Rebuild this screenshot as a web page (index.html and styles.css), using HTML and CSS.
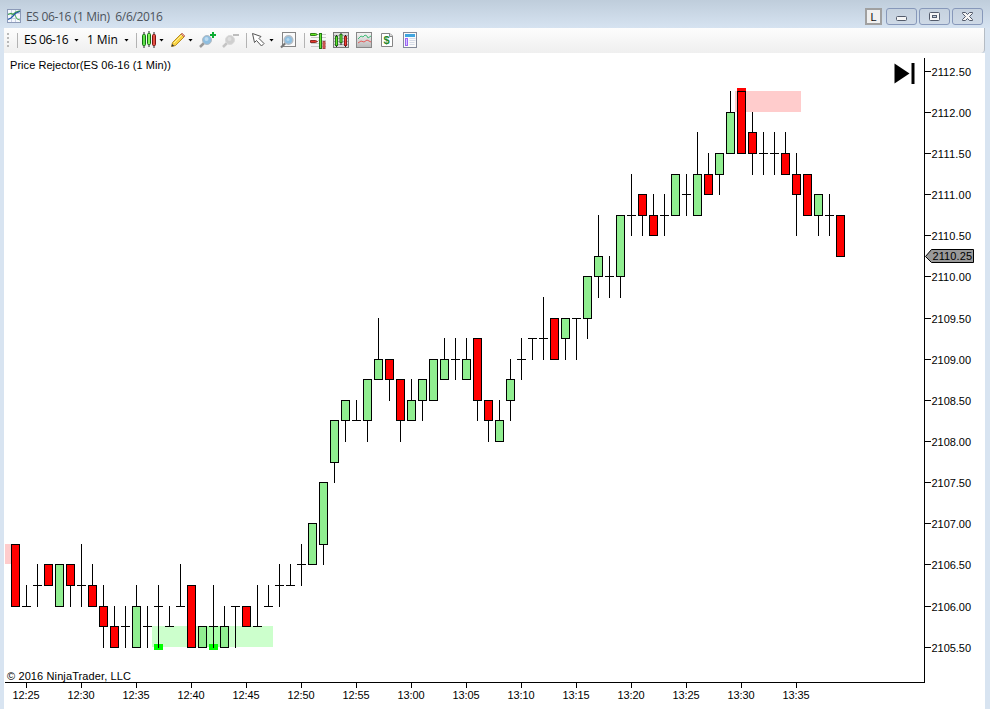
FILE: index.html
```
<!DOCTYPE html>
<html lang="en">
<head>
<meta charset="utf-8">
<title>ES 06-16 (1 Min)</title>
<link rel="stylesheet" href="styles.css">
</head>
<body>
<div class="window">
  <header class="titlebar">
    <svg class="app-icon" width="15" height="15" viewBox="0 0 15 15">
      <rect x=".5" y=".5" width="13" height="13" fill="#f4f7fd" stroke="#8c9ab8"/>
      <path d="M4.500 1v12M8.500 1v12M1 4.500h12M1 9.500h12" stroke="#c6d0e4" fill="none"/>
      <path d="M1 5.500l3-1 2 1 3-2.500 4-1" stroke="#3aa346" stroke-width="1.300" fill="none"/>
      <path d="M1 10.500l3-1.500 3-3 2-2 4-1.500" stroke="#2458a8" stroke-width="1.300" fill="none"/>
      <path d="M8 6l2 4 3 1" stroke="#53b45b" fill="none"/>
    </svg>
    <h1 class="title">ES 06-16 (1 Min)&nbsp; 6/6/2016</h1>
    <div class="controls">
      <span class="link-btn">L</span>
      <span class="win-btn"><svg width="29" height="15"><rect x="9.500" y="7.500" width="10" height="4" rx="1" fill="#f5f5f5" stroke="#535b6b"/></svg></span>
      <span class="win-btn"><svg width="29" height="15"><rect x="9.500" y="3.500" width="10" height="8" rx="1" fill="#f5f5f5" stroke="#535b6b"/><rect x="12.500" y="6.500" width="4" height="2" fill="#c5d2e0" stroke="#535b6b"/></svg></span>
      <span class="win-btn"><svg width="29" height="15"><path d="M9.500 3.500h3l2 2 2-2h3v1l-3 3 3 3v1h-3l-2-2-2 2h-3v-1l3-3-3-3z" fill="#f5f5f5" stroke="#535b6b"/></svg></span>
    </div>
  </header>

  <nav class="toolbar">
    <i class="grip"></i>
    <i class="sep"></i>
    <span class="label">ES 06-16</span><i class="arrow"></i>
    <span class="label wide">1 Min</span><i class="arrow"></i>
    <i class="sep"></i>
    <svg width="16" height="18" viewBox="0 0 16 18">
      <path d="M3 1v16M8 0v16M13 1v16" stroke="#222"/>
      <rect x="1.500" y="3.500" width="3" height="11" rx="1" fill="#5fe34a" stroke="#147014"/>
      <rect x="6.500" y="2.500" width="3" height="11" rx="1" fill="#83f35c" stroke="#147014"/>
      <rect x="11.500" y="3.500" width="3" height="11" rx="1" fill="#e45143" stroke="#7c1515"/>
    </svg>
    <i class="arrow"></i>
    <svg width="16" height="16" viewBox="0 0 16 16">
      <path d="M1.500 14.500l1-4 8.500-8.500 3 3-8.500 8.500z" fill="#f8d344" stroke="#b78c25"/>
      <path d="M4 11l8-8" stroke="#fff09a"/><path d="M11 2l1-1 3 3-1 1z" fill="#f0a08e" stroke="#b46c54" stroke-width=".7"/>
      <path d="M1.500 14.500l.7-2.500 2 2z" fill="#333"/>
    </svg>
    <i class="arrow"></i>
    <svg width="18" height="18" viewBox="0 0 18 18">
      <path d="M1 16l5-5" stroke="#999" stroke-width="2.500"/>
      <circle cx="8" cy="9" r="4.500" fill="#8ebee0" stroke="#b2bbc3"/><circle cx="7.500" cy="8" r="2" fill="#bfdcf0"/>
      <path d="M14 1v6M11 4h6" stroke="#0cab32" stroke-width="2"/>
    </svg>
    <svg width="18" height="18" viewBox="0 0 18 18">
      <path d="M1 16l5-5" stroke="#c4c4c4" stroke-width="2.500"/>
      <circle cx="8" cy="9" r="4.500" fill="#cfcfcf" stroke="#dadada"/><circle cx="7.500" cy="8" r="2" fill="#dedede"/>
      <path d="M11 4h6" stroke="#bdbdbd" stroke-width="2"/>
    </svg>
    <i class="sep"></i>
    <svg width="16" height="16" viewBox="0 0 16 16">
      <path d="M1.500 1.500l2 9 2-2 5 5.500 2.500-2.500-5-5 2-2z" fill="#fff" stroke="#555"/>
    </svg>
    <i class="arrow"></i>
    <svg width="18" height="18" viewBox="0 0 18 18">
      <rect x="2.500" y="1.500" width="13" height="14" fill="#fafafa" stroke="#858585"/>
      <path d="M1 16.500l5-5" stroke="#777" stroke-width="2.200"/>
      <circle cx="8.500" cy="9" r="4.300" fill="#8dbfe2" stroke="#b4bcc4" stroke-width="1.500"/><circle cx="8" cy="8.500" r="1.500" fill="#b5d8ee"/>
    </svg>
    <i class="sep"></i>
    <svg width="18" height="18" viewBox="0 0 18 18">
      <path d="M2 6.500h15M2 12.500h15M9 3.500h8M9 9.500h8M2 15.500h15" stroke="#c9c9c9"/>
      <path d="M1.500 2.500h5l2 1-2 1h-5z" fill="#5fe91f" stroke="#347d1c"/>
      <path d="M1.500 9.500h5l2 1-2 1h-5z" fill="#e4372b" stroke="#8c2b22"/>
      <rect x="10.500" y="2.500" width="2" height="15" fill="#64e52d" stroke="#217718"/>
      <rect x="14" y="10.500" width="2" height="7" fill="#ec655d" stroke="#a34440"/>
    </svg>
    <svg width="18" height="18" viewBox="0 0 18 18">
      <rect x="1.500" y="1.500" width="15" height="15" fill="#ddd" stroke="#777"/>
      <path d="M2 4.500h14M2 7.500h14M2 10.500h14M2 13.500h14" stroke="#aaa"/>
      <path d="M4.500 4v12M9 2v12M13.500 4v12" stroke="#222"/>
      <rect x="3.500" y="5.500" width="2" height="9" fill="#64e52d" stroke="#217718"/>
      <rect x="8" y="3.500" width="2" height="8" fill="#78ee40" stroke="#217718"/>
      <rect x="12.500" y="5.500" width="2" height="9" fill="#f33d31" stroke="#8d1d1d"/>
    </svg>
    <svg width="18" height="18" viewBox="0 0 18 18">
      <defs><linearGradient id="pane" x2="0" y2="1"><stop stop-color="#f5f5f5"/><stop offset="1" stop-color="#b8b8b8"/></linearGradient></defs>
      <rect x="1.500" y="1.500" width="15" height="15" fill="url(#pane)" stroke="#888"/>
      <path d="M3 8l3-3 2 1 2-2 2 1 1 2 3-2" stroke="#42bd79" fill="none"/>
      <path d="M3 12l3-2 3 1 3-2 4 2" stroke="#e45b59" fill="none"/>
    </svg>
    <svg width="18" height="18" viewBox="0 0 18 18">
      <path d="M3.500 2.500h8.500l2.500 2.500v10.500h-11z" fill="#fff" stroke="#858585"/>
      <path d="M11.500 2.500v3h3" fill="#ddd" stroke="#858585"/>
      <text class="dollar" x="5.500" y="13">$</text>
    </svg>
    <svg width="18" height="18" viewBox="0 0 18 18">
      <rect x="2.500" y="1.500" width="13" height="15" fill="#fafafa" stroke="#838a99"/>
      <path d="M4 4.500h10" stroke="#40a5df" stroke-width="3"/>
      <rect x="4.500" y="7.500" width="2" height="7" fill="#d7c3ff" stroke="#9a66f3"/>
      <path d="M8.500 7.500h6M8.500 9.500h6M8.500 11.500h5M8.500 13.500h5" stroke="#d5dbe7"/>
    </svg>
  </nav>

  <main class="chart">
    <svg id="plot" width="981" height="656" viewBox="4 53 981 656"></svg>
  </main>
</div>
<script src="chart.js"></script>
</body>
</html>
```
FILE: styles.css
```
* { box-sizing: border-box; }

body {
  margin: 0;
  width: 990px;
  height: 709px;
  overflow: hidden;
  background: #d8e4f1;
  font-family: "Open Sans", "Noto Sans", sans-serif;
}

.window {
  display: flex;
  flex-direction: column;
  height: 709px;
}

.titlebar {
  display: flex;
  align-items: flex-start;
  height: 28px;
  padding: 8px 7px 0 7px;
  background: linear-gradient(#bfcddb, #d6e3f1);
}

.app-icon { margin-top: 1px; }

.title {
  flex: 1;
  margin: 0 0 0 4px;
  font-size: 12px;
  font-weight: 400;
  line-height: 17px;
  letter-spacing: -0.33px;
  color: #4c535b;
}

.controls { display: flex; gap: 2px; }

.link-btn {
  width: 17px;
  height: 17px;
  margin-right: 2px;
  border: 2px solid #a0a0a0;
  background: #f0f0f0;
  font: 11px/14px "Liberation Sans", sans-serif;
  text-align: center;
  color: #111;
}

.win-btn {
  width: 31px;
  height: 17px;
  border: 1px solid #8798ba;
  border-radius: 3px;
  background: linear-gradient(#c6d2df, #ced9e6);
}

.win-btn svg, .toolbar svg, .chart svg, .app-icon { display: block; }

.toolbar {
  display: grid;
  grid-template-columns: 10px 7px 50px 13px 37px 12px 5px 18px 11px 18px 11px 23px 24px 5px 18px 11px 24px 5px 23px 23px 23px 23px 23px;
  align-items: center;
  height: 25px;
  margin: 0 5px 0 4px;
  padding: 0 0 1px 3px;
  border-right: 1px solid #b5bcc4;
  border-bottom-right-radius: 4px;
  background: linear-gradient(#fdfdfd, #efefef);
}

.label {
  font-size: 12px;
  line-height: 24px;
  letter-spacing: -0.45px;
  white-space: nowrap;
  color: #000;
}

.label.wide { letter-spacing: -0.1px; }

.grip {
  width: 2px;
  height: 15px;
  background: repeating-linear-gradient(#b9b9b9 0 2px, transparent 2px 4px);
}

.sep {
  width: 1px;
  height: 15px;
  background: #b3b3b3;
}

.arrow {
  width: 5px;
  height: 3px;
  background: #000;
  clip-path: polygon(0 0, 100% 0, 50% 100%);
}

.dollar { font: bold 11px "Liberation Sans", sans-serif; fill: #26892b; }

.chart {
  flex: 1;
  margin: 0 5px 0 4px;
  background: #fff;
}

.chart text { font: 11px "Liberation Sans", Arial, sans-serif; fill: #000; }
.crisp { shape-rendering: crispEdges; }
```
FILE: chart.js
```
// Each bar: high, body top, body bottom, low, direction (u = up, d = down, - = doji).
// Levels are counted in quarter points below 2112.50.
const bars = `
23 23 26 26 d|25 26 26 26 -|24 25 25 26 -|24 24 25 25 d|24 24 26 26 u|24 24 25 26 d
23 25 25 26 -|24 25 26 26 d|25 26 27 28 d|26 27 28 28 d|26 27 27 28 -|25 26 28 28 u
26 27 27 28 -|25 26 26 28 -|26 27 27 27 -|24 26 26 26 -|25 25 28 28 d|27 27 28 28 u
25 27 27 28 -|26 27 28 28 u|26 26 26 28 -|26 26 27 27 d|25 27 27 27 -|25 26 26 26 -
24 25 25 26 -|24 25 25 25 -|23 24 24 25 -|22 22 24 24 u|20 20 23 24 u|17 17 19 20 u
16 16 17 18 u|16 17 17 17 -|15 15 17 18 u|12 14 15 15 u|14 14 15 16 d|15 15 17 18 d
15 16 17 17 u|15 15 16 17 u|14 14 16 16 u|13 14 15 15 u|13 14 14 15 -|13 14 15 15 u
13 13 16 17 d|16 16 17 18 d|16 17 18 18 u|14 15 16 17 u|13 14 14 15 -|13 13 13 14 -
11 13 13 14 -|12 12 14 14 d|12 12 13 14 u|12 12 12 14 -|10 10 12 13 u|7 9 10 11 u
9 10 10 11 -|7 7 10 11 u|5 7 7 8 -|6 6 7 8 d|6 7 8 8 d|6 7 7 8 -
5 5 7 7 u|5 6 6 7 -|3 5 7 7 u|4 5 6 6 d|4 4 5 6 u|1 2 4 4 u
1 1 4 4 d|2 3 4 5 d|3 4 4 5 -|3 4 4 5 -|3 4 5 5 d|4 5 6 8 d
5 5 7 7 d|6 6 7 8 u|6 7 7 8 -|7 7 9 9 d`.trim().split(/[|\n]/).map(s => s.split(' '));

const levelY = k => Math.floor(71.2 + k * 144 / 7);
const barX = i => 15 + 11 * i;
const rect = (x, y, w, h, fill, extra = '') =>
  `<rect class="crisp" x="${x}" y="${y}" width="${w}" height="${h}" fill="${fill}" ${extra}/>`;
const text = (x, y, s, w, extra = '') =>
  `<text x="${x}" y="${y}" textLength="${w}" ${extra}>${s}</text>`;

let out = '';

// Rejection zones
out += rect(5, 544, 7, 20, '#ffcccc');
out += rect(735, 91, 66, 21, '#ffcccc');
out += rect(152, 626, 121, 21, '#ccffcc');
out += rect(207, 626, 20, 21, '#aaffaa');

// Markers
out += rect(154, 644, 9, 6, '#00ff00');
out += rect(209, 644, 9, 6, '#00ff00');
out += rect(737, 88, 9, 6, '#ff0000');

bars.forEach(([h, t, b, l, dir], i) => {
  const x = barX(i);
  const yh = levelY(+h), yt = levelY(+t), yb = levelY(+b), yl = levelY(+l);
  out += rect(x, yh, 1, yl - yh + 1, '#000');
  if (dir === '-') out += rect(x - 4, yt, 9, 1, '#000');
  else out += rect(x - 3.5, yt + 0.5, 8, yb - yt, dir === 'u' ? '#90ee90' : '#ff0000', 'stroke="#000"');
});

// Price axis
out += rect(924, 58, 1, 625, '#000');
for (let n = 0; n <= 14; n++) {
  const y = levelY(2 * n);
  out += rect(925, y, 6, 1, '#000');
  out += text(931.5, y + 5, (2112.5 - n / 2).toFixed(2), 39.5);
}

// Time axis
out += rect(5, 682, 920, 1, '#000');
for (let n = 0; n < 15; n++) {
  const x = 26 + 55 * n, m = 25 + 5 * n;
  out += rect(x, 683, 1, 5, '#000');
  out += text(x - 13.5, 699, (12 + Math.floor(m / 60)) + ':' + String(m % 60).padStart(2, '0'), 27);
}

// Last price flag
out += '<path d="M925.5 256.500l6-7h42v13h-42z" fill="#999" stroke="#000"/>';
out += text(932.5, 260, '2110.25', 39.5);

out += text(10, 69, 'Price Rejector(ES 06-16 (1 Min))', 161);
out += text(7, 680, '© 2016 NinjaTrader, LLC', 124);

// Jump to latest bar
out += '<path d="M894.5 63.500v20l15-10z" fill="#000"/><rect x="911.5" y="63" width="3" height="21" fill="#000"/>';

document.getElementById('plot').innerHTML = out;
```
